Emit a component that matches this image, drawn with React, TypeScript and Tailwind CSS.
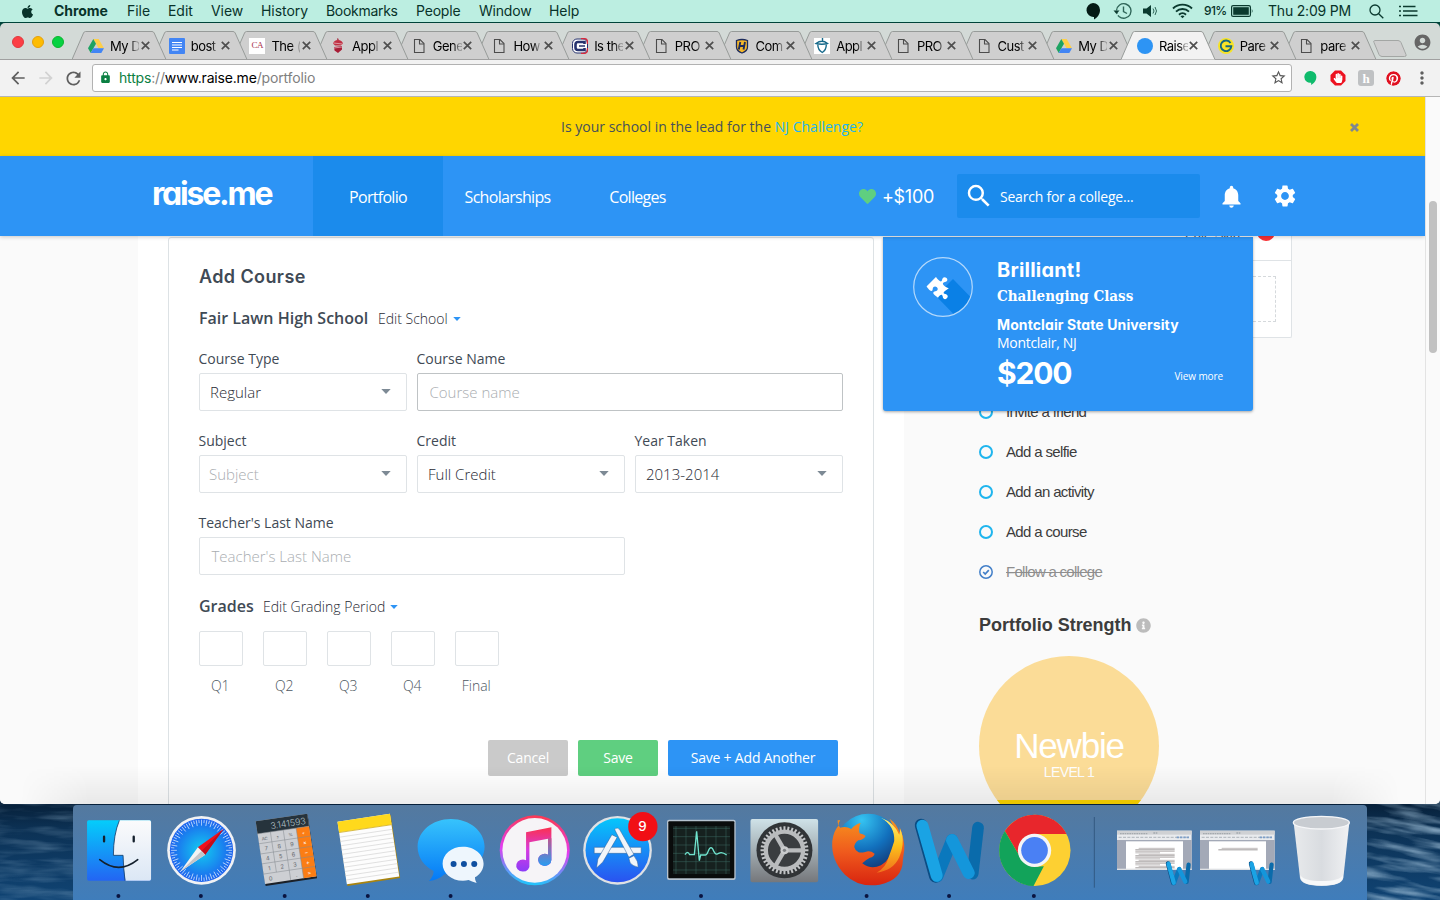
import type { ReactNode } from "react";
import { FaApple, FaHeart, FaInfoCircle, FaPinterest, FaPuzzlePiece, FaHandPaper } from "react-icons/fa";
import {
  MdAccountCircle,
  MdArrowBack,
  MdArrowForward,
  MdLock,
  MdMoreVert,
  MdNotifications,
  MdRefresh,
  MdSearch,
  MdSettings,
  MdStarBorder,
} from "react-icons/md";

/* ---------- Menu bar ---------- */

function MenuBar() {
  return (
    <div className="flex h-[23px] shrink-0 items-center border-b border-[#00443a] bg-[#bceee1] text-[14px] leading-[22px] whitespace-nowrap text-[#08332a]">
      <FaApple className="ml-[20px] size-[15px] shrink-0" />
      <div className="ml-[19px] flex tracking-[-0.05px]">
        <span className="w-[73px] font-bold">Chrome</span>
        <span className="w-[41px]">File</span>
        <span className="w-[43px]">Edit</span>
        <span className="w-[50px]">View</span>
        <span className="w-[65px]">History</span>
        <span className="w-[90px] tracking-[-0.3px]">Bookmarks</span>
        <span className="w-[63px] tracking-[-0.2px]">People</span>
        <span className="w-[70px] tracking-[-0.2px]">Window</span>
        <span className="w-[36px]">Help</span>
      </div>
      <div className="ml-[500px] flex items-center">
        <svg className="h-[18px] w-[16px]" viewBox="0 0 16 18">
          <path d="M8 1a7 7 0 1 0 1 14v2.500c3-1.500 6-5 6-9.500A7 7 0 0 0 8 1z" fill="#051b16" />
        </svg>
        <svg className="ml-[12px] h-[18px] w-[20px]" viewBox="0 0 20 18" fill="none" stroke="#2f6558" strokeWidth="1.400">
          <path d="M3.500 8.500A7.300 7.300 0 1 1 6 14.500" />
          <path d="M6 14.500a7.300 7.300 0 0 1-2-3" strokeDasharray="1.500 1.500" />
          <path d="M10.500 4.500v5l3.500 2" />
          <path d="M.500 8.500h6L3.500 12z" fill="#0b3a2f" stroke="none" />
        </svg>
        <svg className="ml-[10px] h-[14px] w-[15px]" viewBox="0 0 15 14" fill="#0b3a2f">
          <path d="M0 4.500h3.500L8 1v12L3.500 9.500H0z" />
          <path d="M10 4.500q2 2.500 0 5M12 3q3 4 0 8" fill="none" stroke="#2f6558" strokeWidth="1" />
        </svg>
        <svg className="ml-[14px] h-[16px] w-[21px]" viewBox="0 0 21 16" fill="none" stroke="#0b3a2f" strokeWidth="1.900">
          <path d="M1 5.500a13.500 13.500 0 0 1 19 0M4 8.700a9.200 9.200 0 0 1 13 0M7 11.700a5 5 0 0 1 7 0" />
          <path d="M8.500 13.300a3 3 0 0 1 4 0l-2 2z" fill="#0b3a2f" stroke="none" />
        </svg>
        <span className="ml-[11px] w-[23px] text-[12px] font-medium tracking-[-0.6px]">91%</span>
        <svg className="ml-[4px] h-[12px] w-[23px]" viewBox="0 0 23 12">
          <rect x=".6" y=".6" width="18.800" height="10.800" rx="1.500" fill="none" stroke="#0b3a2f" strokeWidth="1.200" />
          <rect x="2.200" y="2.200" width="15.600" height="7.600" fill="#0b3a2f" />
          <path d="M20.800 3.500q1.600 2.500 0 5z" fill="#0b3a2f" />
        </svg>
        <span className="ml-[14px] w-[84px] tracking-[-0.2px]">Thu 2:09 PM</span>
        <svg className="ml-[17px] h-[15px] w-[15px]" viewBox="0 0 15 15" fill="none" stroke="#0b3a2f" strokeWidth="1.300">
          <circle cx="6" cy="6" r="5" />
          <path d="M9.700 9.700l4.600 4.600" />
        </svg>
        <svg className="ml-[15px] h-[12px] w-[19px]" viewBox="0 0 19 12" stroke="#0b3a2f" strokeWidth="1.700">
          <path d="M0 1.500h2M4 1.500h12.500M0 6h2M4 6h14.500M0 10.500h2M4 10.500h14.500" />
        </svg>
      </div>
    </div>
  );
}

/* ---------- Browser tabs ---------- */

const DriveIcon = () => (
  <svg className="size-4" viewBox="0 0 16 16">
    <path d="M5.300 1h5.400L16 10.200h-5.400z" fill="#ffcf48" />
    <path d="M5.300 1 0 10.200 2.700 15 8 5.700z" fill="#1ea362" />
    <path d="M5.400 10.200H16L13.300 15H2.700z" fill="#4285f4" />
  </svg>
);
const DocIcon = () => (
  <svg className="size-4" viewBox="0 0 16 16">
    <rect width="16" height="16" rx="1" fill="#4285f4" />
    <path d="M3 4.500h10M3 7h10M3 9.500h10M3 12h6.500" stroke="#fff" strokeWidth="1.100" />
  </svg>
);
const PageIcon = () => (
  <svg className="size-4" viewBox="0 0 16 16" fill="none" stroke="#4c4c4c" strokeWidth="1.100">
    <path d="M3.500 1.500h5.500l4 4v9h-9.500z" />
    <path d="M8.500 1.500v4.500h4.500" />
  </svg>
);
const CaIcon = () => (
  <span className="flex size-4 items-center justify-center bg-white font-['Liberation_Serif',serif] text-[9px] leading-none tracking-[-0.5px] text-[#a8304c]">
    CA
  </span>
);
const AcornIcon = () => (
  <svg className="size-4" viewBox="0 0 16 16">
    <path d="M7.500 .5l.8 2" stroke="#a31f34" strokeWidth="1.200" />
    <path d="M3 5.500Q4 2 8 2t5 3.500L11 7.500H5z" fill="#c02f43" />
    <path d="M4 9l8-1v3.500L8 15 4.500 12.500z" fill="#a81c36" />
    <path d="M3.500 5l9 1M4 10l8-1" stroke="#e9c3c8" strokeWidth=".7" />
  </svg>
);
const CIcon = () => (
  <svg className="size-4" viewBox="0 0 16 16">
    <rect x=".5" y="1" width="15" height="14" rx="4.500" fill="#fff" stroke="#27336e" />
    <path d="M9 .600h3q3.500 0 3.500 3.500v2M15.500 10v2q0 3.400-3.500 3.400H9" fill="none" stroke="#d8293d" strokeWidth="1.400" />
    <path d="M12.500 6V4H6Q3.500 4 3.500 6.500v3Q3.500 12 6 12h6.500v-2" fill="none" stroke="#27336e" strokeWidth="2.600" />
    <path d="M7 8h6" stroke="#27336e" strokeWidth="1.600" />
  </svg>
);
const HIcon = () => (
  <svg className="size-4" viewBox="0 0 16 16">
    <path d="M2.500 2.500Q8 .500 13.500 2.500V9q0 4-5.500 6-5.500-2-5.500-6z" fill="#f4b72a" stroke="#1d2b5c" strokeWidth="1.300" />
    <path d="M6.300 4 4.800 11.500M11 4l-1.500 7.500M5.500 8h5" stroke="#1d2b5c" strokeWidth="1.900" />
  </svg>
);
const BoardIcon = () => (
  <svg className="size-4 bg-white" viewBox="0 0 16 16" fill="none" stroke="#176a8b" strokeWidth="1.400">
    <path d="M8.500 0v3M2 5.500Q8 1 13.500 5.500Q8 7 2 5.500z" />
    <path d="M3.800 6.500q0 5.500 4.500 8 4-2.500 4-8" />
  </svg>
);
const DotIcon = () => <span className="block size-4 rounded-full bg-[#2d94f4]" />;
const GIcon = () => (
  <svg className="size-4" viewBox="0 0 16 16">
    <circle cx="8" cy="8" r="8" fill="#f7e326" />
    <path d="M12.500 5A5.300 5.300 0 1 0 13.300 8.300H7.500" fill="none" stroke="#17697f" strokeWidth="1.900" />
  </svg>
);

const TABS: { icon: ReactNode; title: string; active?: boolean }[] = [
  { icon: <DriveIcon />, title: "My D" },
  { icon: <DocIcon />, title: "bost" },
  { icon: <CaIcon />, title: "The (" },
  { icon: <AcornIcon />, title: "Appl" },
  { icon: <PageIcon />, title: "Gene" },
  { icon: <PageIcon />, title: "How" },
  { icon: <CIcon />, title: "Is the" },
  { icon: <PageIcon />, title: "PRO" },
  { icon: <HIcon />, title: "Com" },
  { icon: <BoardIcon />, title: "Appl" },
  { icon: <PageIcon />, title: "PRO" },
  { icon: <PageIcon />, title: "Cust" },
  { icon: <DriveIcon />, title: "My D" },
  { icon: <DotIcon />, title: "Raise", active: true },
  { icon: <GIcon />, title: "Pare" },
  { icon: <PageIcon />, title: "pare" },
];

function TabStrip() {
  return (
    <div className="relative flex h-[37px] shrink-0 items-end bg-[#d3dad7]">
      <div className="flex h-[37px] w-[72px] shrink-0 items-center gap-[8px] pl-[12px]">
        <span className="size-[12px] rounded-full border border-[#e0383e] bg-[#fc3e45]" />
        <span className="size-[12px] rounded-full border border-[#e5a00d] bg-[#fdbc02]" />
        <span className="size-[12px] rounded-full border border-[#0cb530] bg-[#06d242]" />
      </div>
      {TABS.map((tab, i) => (
        <div
          key={i}
          className="relative flex h-[29px] w-[80.7px] shrink-0 items-center"
          style={{ zIndex: tab.active ? 30 : 20 - i }}
        >
          <svg className="absolute top-0 left-0 h-[29px] w-[95px]" viewBox="0 0 95 29">
            <path
              d="M0 28.500 11.500 2Q12.200.500 13.500.500H80Q81.500.500 82.200 2L94 28.500z"
              fill={tab.active ? "#f2f2f2" : "#cfcfcf"}
            />
            <path
              d="M0 28.500 11.500 2Q12.200.500 13.500.500H80Q81.500.500 82.200 2L94 28.500"
              fill="none"
              stroke="#979b99"
            />
            {!tab.active && <path d="M0 28.500H95" stroke="#a0a0a0" />}
          </svg>
          <span className="relative ml-[16px] size-4 shrink-0">{tab.icon}</span>
          <span className="relative ml-[6px] w-[29px] text-[13px] leading-[18px] tracking-[-0.5px] whitespace-nowrap text-black [mask-image:linear-gradient(to_right,black_70%,rgba(0,0,0,0.25)_92%)]">
            {tab.title}
          </span>
          <svg className="relative ml-[1.500px] size-[9px] shrink-0" viewBox="0 0 9 9" stroke="#4f4f4f" strokeWidth="1.700">
            <path d="M.8.8l7.400 7.400M8.200.8.8 8.200" />
          </svg>
        </div>
      ))}
      <svg className="mb-[3px] ml-[10px] h-[17px] w-[34px] shrink-0" viewBox="0 0 34 17">
        <path d="M1.500.5H25q2 0 3 2l5 12q.8 2-1.500 2H9q-2 0-3-2L1 2.500Q.3.5 1.500.5z" fill="#cfcfcf" stroke="#a3a6a4" />
      </svg>
      <MdAccountCircle className="mb-[8px] ml-[6px] size-[19px] shrink-0 text-[#666]" />
      <div className="absolute inset-x-0 bottom-0 h-px bg-[#a0a0a0]" />
    </div>
  );
}

function Toolbar() {
  return (
    <div className="flex h-[37px] shrink-0 items-center border-b border-[#b5b5b5] bg-[#f2f2f2] text-[#5f5f5f]">
      <MdArrowBack className="ml-[8px] size-[20px]" />
      <MdArrowForward className="ml-[8px] size-[20px] text-[#d2d2d2]" />
      <MdRefresh className="ml-[7px] size-[21px]" />
      <div className="ml-[8px] flex h-[28px] w-[1200px] items-center rounded-[3px] border border-[#b2b2b2] bg-white pb-px text-[14px] text-[#808080]">
        <MdLock className="ml-[6px] size-[13px] text-[#0b8043]" />
        <span className="ml-[7px] tracking-[-0.17px]">
          <span className="text-[#0b8043]">https</span>://<span className="text-black">www.raise.me</span>/portfolio
        </span>
        <MdStarBorder className="mr-[4px] ml-auto size-[17px] text-[#5a5a5a]" />
      </div>
      <svg className="ml-[12px] h-[14px] w-[13px]" viewBox="0 0 14 15">
        <path d="M7 0a6.300 6.300 0 1 0 .7 12.500V15c3-1.500 5.600-4.500 5.600-8.500A6.300 6.300 0 0 0 7 0z" fill="#0fbb6c" />
      </svg>
      <span className="relative ml-[13px] flex size-[16px] items-center justify-center">
        <svg className="absolute size-[16px]" viewBox="0 0 16 16">
          <path d="M5 .5h6L15.500 5v6L11 15.500H5L.5 11V5z" fill="#ed1220" />
        </svg>
        <FaHandPaper className="relative size-[10px] text-white" />
      </span>
      <span className="ml-[12px] flex size-[16px] items-center justify-center rounded-[3px] bg-[#bfc1c3] font-['Liberation_Serif',serif] text-[13px] leading-none font-bold text-white">
        h
      </span>
      <FaPinterest className="ml-[12px] size-[15px] rounded-full bg-white text-[#e01020]" />
      <MdMoreVert className="ml-[11px] size-[20px]" />
    </div>
  );
}

/* ---------- raise.me page ---------- */

function Banner() {
  return (
    <div className="flex h-[59px] shrink-0 items-center bg-[#ffd600] pb-px text-[14px] text-[#46505a]">
      <span className="ml-[561px] w-[302px] tracking-[0.01px] whitespace-nowrap">
        Is your school in the lead for the <span className="text-[#1fb5ee]">NJ Challenge?</span>
      </span>
      <svg className="mt-[2px] ml-[487px] size-[9px]" viewBox="0 0 9 9" stroke="#7f8790" strokeWidth="2.800">
        <path d="M1 1l7 7M8 1 1 8" />
      </svg>
    </div>
  );
}

function NavBar() {
  return (
    <div className="relative z-20 flex h-[80px] shrink-0 items-center bg-[#2d94f5] text-[16px] text-white shadow-[0_1px_4px_rgba(0,0,0,0.2)]">
      <span className="mb-[4px] ml-[152px] w-[161px] font-['Inter',sans-serif] text-[32px] leading-none font-bold tracking-[-2.2px] [font-feature-settings:'cv11']">
        raise.me
      </span>
      <span className="flex h-full w-[130px] items-center justify-center bg-[#1b8bec] pt-px tracking-[-0.7px]">Portfolio</span>
      <span className="flex w-[129px] justify-center pt-px tracking-[-0.7px]">Scholarships</span>
      <span className="flex w-[131px] justify-center pt-px tracking-[-0.7px]">Colleges</span>
      <FaHeart className="ml-[156px] size-[17px] text-[#5fcf80]" />
      <span className="ml-[6px] w-[53px] font-['Inter',sans-serif] text-[18px] tracking-[-0.3px]">+$100</span>
      <div className="ml-[22px] flex h-[44px] w-[243px] items-center rounded-[2px] bg-[#1b8bec] text-[14px]">
        <MdSearch className="ml-[7px] size-[30px]" />
        <span className="ml-[6px] tracking-[-0.22px]">Search for a college...</span>
      </div>
      <MdNotifications className="ml-[18px] size-[27px]" />
      <MdSettings className="ml-[27px] size-[26px]" />
    </div>
  );
}

const Caret = ({ className }: { className: string }) => (
  <svg className={className} viewBox="0 0 10 5" fill="currentColor">
    <path d="M.3 0h9.400L5 5z" />
  </svg>
);

function Select({ label, value, muted }: { label: string; value: string; muted?: boolean }) {
  return (
    <div className="flex w-[208px] flex-col gap-[4px]">
      <label className="-ml-[0.5px] h-[20px] text-[14px] leading-[20px]">{label}</label>
      <div className="flex h-[38px] items-center justify-between rounded-[2px] border border-[#dfe3e6] pr-[15px] pl-[10px] text-[15px] font-light text-[#1f2933]">
        <span className={muted ? "-ml-px text-[#a9adb1]" : ""}>{value}</span>
        <Caret className="mb-[2px] h-[5px] w-[10px] text-[#7d8a95]" />
      </div>
    </div>
  );
}

function TextField({ label, placeholder, dark }: { label: string; placeholder: string; dark?: boolean }) {
  return (
    <div className="flex w-[426px] flex-col gap-[4px]">
      <label className="-ml-[0.5px] h-[20px] text-[14px] leading-[20px]">{label}</label>
      <div
        className={
          (dark ? "border-[#bfc3c5]" : "border-[#dfe3e6]") +
          " flex h-[38px] items-center rounded-[2px] border pl-[11.5px] text-[15px] font-light text-[#a9adb1]"
        }
      >
        {placeholder}
      </div>
    </div>
  );
}

function CourseForm() {
  return (
    <div className="mt-px ml-[30px] flex h-[600px] w-[706px] flex-col rounded-[3px] border border-[#dde2e5] pr-[30px] pl-[30px] text-[#3f4a55]">
      <h2 className="mt-[26px] h-[26px] font-['Inter',sans-serif] text-[18px] leading-[26px] font-semibold tracking-[0.4px]">Add Course</h2>
      <div className="mt-[16px] flex h-[24px] items-center">
        <span className="w-[179px] text-[16px] font-semibold whitespace-nowrap">Fair Lawn High School</span>
        <span className="text-[14px] font-light text-[#1f2933]">Edit School</span>
        <Caret className="mt-[2px] ml-[5px] h-[4px] w-[8px] text-[#2d94f5]" />
      </div>
      <div className="mt-[19px] flex gap-[10px]">
        <Select label="Course Type" value="Regular" />
        <TextField label="Course Name" placeholder="Course name" dark />
      </div>
      <div className="mt-[20px] flex gap-[10px]">
        <Select label="Subject" value="Subject" muted />
        <Select label="Credit" value="Full Credit" />
        <Select label="Year Taken" value="2013-2014" />
      </div>
      <div className="mt-[20px] flex">
        <TextField label="Teacher's Last Name" placeholder="Teacher's Last Name" />
      </div>
      <div className="mt-[19px] flex h-[24px] items-center">
        <span className="w-[64px] text-[16px] font-semibold">Grades</span>
        <span className="text-[14px] font-light text-[#1f2933]">Edit Grading Period</span>
        <Caret className="mt-[2px] ml-[5px] h-[4px] w-[8px] text-[#2d94f5]" />
      </div>
      <div className="mt-[13px] flex gap-[20px] text-[14px] font-light text-[#4d5761]">
        {["Q1", "Q2", "Q3", "Q4", "Final"].map((q) => (
          <div key={q} className="flex w-[44px] flex-col items-center">
            <div className="h-[35px] w-[44px] rounded-[2px] border border-[#dfe3e6]" />
            <span className="mt-[10px] mr-[1.5px] h-[20px] leading-[20px]">{q}</span>
          </div>
        ))}
      </div>
      <div className="mt-[44px] mr-[5px] flex justify-end gap-[10px] text-[14px] tracking-[-0.2px] text-white">
        <span className="flex h-[36px] w-[80px] items-center justify-center rounded-[2px] bg-[#cacaca] pb-[2px]">Cancel</span>
        <span className="flex h-[36px] w-[80px] items-center justify-center rounded-[2px] bg-[#5fcf80] pb-[2px]">Save</span>
        <span className="flex h-[36px] w-[170px] items-center justify-center rounded-[2px] bg-[#2d94f5] pb-[2px]">Save + Add Another</span>
      </div>
    </div>
  );
}

function Sidebar() {
  const todo = ["Invite a friend", "Add a selfie", "Add an activity", "Add a course"];
  return (
    <div className="w-[388px] font-['Liberation_Sans',sans-serif] text-[#3c3c3c]">
      <div className="h-[102px] rounded-b-[2px] border-r border-b border-[#dfe3e6] bg-white">
        <div className="flex h-[25px] justify-end overflow-hidden border-b border-[#dfe3e6]">
          <span className="-mt-[10px] mr-[17px] text-[13px] leading-[17px] text-[#555]">Edit, Skip</span>
          <span className="-mt-[13px] mr-[16px] size-[18px] rounded-full bg-[#f93034]" />
        </div>
        <div className="mt-[15px] mr-[15px] h-[46px] border border-dashed border-[#d5d9dc]" />
      </div>
      <div className="mt-[54px] ml-[75px] flex flex-col text-[15px] tracking-[-0.65px]">
        {todo.map((t) => (
          <div key={t} className="flex h-[40px] items-center">
            <span className="mb-px size-[14px] rounded-full border-2 border-[#1fb5ee]" />
            <span className="ml-[13px]">{t}</span>
          </div>
        ))}
        <div className="flex h-[40px] items-center text-[#8e8e8e]">
          <svg className="mb-px size-[14px]" viewBox="0 0 14 14" fill="none" stroke="#427fc8">
            <circle cx="7" cy="7" r="6.200" strokeWidth="1.500" />
            <path d="M4.200 7l2 2 3.600-3.800" strokeWidth="1.700" />
          </svg>
          <span className="ml-[13px] tracking-[-0.72px] line-through">Follow a college</span>
        </div>
      </div>
      <div className="mt-[21px] ml-[75px] flex h-[24px] items-center">
        <span className="text-[18px] font-bold tracking-[-0.03px] whitespace-nowrap">Portfolio Strength</span>
        <FaInfoCircle className="ml-[5px] size-[15px] text-[#bcbcbc]" />
      </div>
      <div className="mt-[19px] ml-[75px] h-[180px] w-[180px] overflow-hidden rounded-full bg-[#fbdc97] text-center text-white">
        <div className="mt-[69px] h-[42px] text-[35px] leading-[42px] tracking-[-1.2px]">Newbie</div>
        <div className="h-[33px] text-[14px] leading-[10px] tracking-[-0.6px]">LEVEL 1</div>
        <div className="h-[36px] bg-[#fdd500]" />
      </div>
    </div>
  );
}

function AwardPopup() {
  return (
    <div className="absolute top-[1px] left-[883px] z-10 flex h-[174px] w-[370px] rounded-b-[3px] bg-[#2d94f5] text-white shadow-[0_1px_3px_rgba(0,0,0,0.35)]">
      <div className="relative mt-[20px] ml-[30px] size-[60px] shrink-0">
        <svg className="absolute inset-0 size-[60px]" viewBox="0 0 60 60">
          <path d="M40 22 57.500 40A29.500 29.500 0 0 1 41 57.500L23 39z" fill="#0a80e6" />
          <circle cx="30" cy="30" r="29.300" fill="none" stroke="#b5d9fb" strokeWidth="1.200" />
        </svg>
        <FaPuzzlePiece className="absolute top-[18.5px] left-[17px] size-[23px] rotate-45" />
      </div>
      <div className="ml-[24px] w-[226px] font-['Inter',sans-serif] whitespace-nowrap [font-feature-settings:'cv11']">
        <div className="mt-[20px] h-[26px] text-[20px] leading-[26px] font-bold tracking-[0.2px]">Brilliant!</div>
        <div className="mt-[2px] h-[23px] font-['DejaVu_Serif_Condensed','DejaVu_Serif',serif] text-[15px] leading-[22px] font-bold">
          Challenging Class
        </div>
        <div className="mt-[7px] h-[20px] text-[14px] leading-[20px] font-bold tracking-[0.1px]">Montclair State University</div>
        <div className="h-[18px] font-['Open_Sans',sans-serif] text-[14px] leading-[16px] tracking-[-0.3px]">Montclair, NJ</div>
        <div className="flex h-[40px] items-center justify-between">
          <span className="text-[30px] leading-[40px] font-bold tracking-[-1.2px]">$200</span>
          <span className="mt-[7px] font-['Open_Sans',sans-serif] text-[10px] tracking-[-0.1px]">View more</span>
        </div>
      </div>
    </div>
  );
}

function Page() {
  return (
    <div className="flex h-[707px] shrink-0 bg-white">
      <div className="flex w-[1425px] flex-col overflow-hidden">
        <Banner />
        <NavBar />
        <div className="relative flex h-[568px] overflow-hidden bg-[#fafafa]">
          <div className="ml-[138px] h-[568px] w-[766px] shrink-0 bg-white">
            <CourseForm />
          </div>
          <Sidebar />
          <AwardPopup />
        </div>
      </div>
      <div className="w-[15px] border-l border-[#e3e3e3] bg-[#fafafa] pt-[104px] pl-[3px]">
        <div className="h-[152px] w-[8px] rounded-full bg-[#c1c1c1]" />
      </div>
      <div className="pointer-events-none absolute bottom-0 left-[20px] z-30 h-[38px] w-[1380px] bg-linear-to-b from-transparent to-black/7 [mask-image:linear-gradient(to_right,transparent,black_5%,black_95%,transparent)]" />
    </div>
  );
}

/* ---------- Dock ---------- */

function DockItem({ x, dot, children }: { x: number; dot?: number; children: ReactNode }) {
  return (
    <svg className="h-[95px] w-[83.2px] shrink-0" viewBox={`${x} 30 249.6 285`} overflow="visible">
      {children}
      {dot && <circle cx={dot} cy="303" r="6" fill="#0a1440" />}
    </svg>
  );
}

const range = (n: number) => Array.from({ length: n }, (_, i) => i);

function Finder() {
  return (
    <DockItem x={229.8} dot={354}>
      <defs>
        <linearGradient id="fnB" x1="0" y1="0" x2="0" y2="1">
          <stop offset="0" stopColor="#04cdfb" />
          <stop offset="1" stopColor="#2365f3" />
        </linearGradient>
        <linearGradient id="fnW" x1="0" y1="0" x2="0" y2="1">
          <stop offset="0" stopColor="#fbfbfc" />
          <stop offset="1" stopColor="#dbe7f5" />
        </linearGradient>
      </defs>
      <rect x="260" y="76" width="192" height="181" rx="5" fill="url(#fnB)" />
      <path d="M357 76h90q5 0 5 5v171q0 5-5 5h-72q-6-36-7-76h-29q0-62 18-105z" fill="url(#fnW)" />
      <path d="M357 76q-18 43-18 105h29q1 40 6 76" fill="none" stroke="#16406c" strokeWidth="2.500" />
      <path d="M298 194q57 46 114 0" fill="none" stroke="#14202c" strokeWidth="5" strokeLinecap="round" />
      <path d="M311 125v14M400 125v14" stroke="#14202c" strokeWidth="7" strokeLinecap="round" />
    </DockItem>
  );
}

function Safari() {
  return (
    <DockItem x={479.4} dot={602}>
      <defs>
        <radialGradient id="sf">
          <stop offset="0" stopColor="#12cdf0" />
          <stop offset="1" stopColor="#1d62ee" />
        </radialGradient>
      </defs>
      <circle cx="604" cy="166" r="103" fill="#f1f2f4" />
      <circle cx="604" cy="166" r="95" fill="url(#sf)" />
      {range(72).map((i) => (
        <path key={i} d={i % 2 ? "M604 74v10" : "M604 74v18"} stroke="#e9f5ff" strokeWidth="2" transform={`rotate(${i * 5} 604 166)`} />
      ))}
      <path d="M670 102 593 157l22 22z" fill="#f0101c" />
      <path d="M670 102 604 168l11 11z" fill="#c40d1a" />
      <path d="M540 230 593 157l22 22z" fill="#f3f3f3" />
      <path d="M540 230l64-62 11 11z" fill="#c5c5c8" />
    </DockItem>
  );
}

function Calculator() {
  const keys = [
    ["AC", "±", "%", "÷"],
    ["7", "8", "9", "×"],
    ["4", "5", "6", "−"],
    ["1", "2", "3", "+"],
    ["0", "", ".", "="],
  ];
  return (
    <DockItem x={729} dot={854}>
      <g transform="translate(767 79) rotate(-8.500)">
        <rect x="1" y="3" width="156" height="193" fill="#1b2027" />
        <rect width="156" height="190" fill="#cdcfd3" />
        <rect width="156" height="38" fill="#26333c" />
        <text x="149" y="30" textAnchor="end" fontSize="27" fill="#b9c6cc" fontFamily="Inter, sans-serif" fontWeight="300">
          3.141593
        </text>
        <rect x="117" y="38" width="39" height="152" fill="#fb7d14" />
        {[38, 68, 99, 129, 160].map((y) => (
          <path key={y} d={`M0 ${y}H156`} stroke="#85898f" strokeWidth="1.500" />
        ))}
        <path d="M39 38V160M78 38V190M117 38V190" stroke="#85898f" strokeWidth="1.500" />
        {keys.map((row, r) =>
          row.map((k, c) => (
            <text
              key={`${r}${c}`}
              x={19.500 + 39 * c}
              y={60 + 30.500 * r}
              textAnchor="middle"
              fontSize={r === 0 ? 13 : 17}
              fill={c === 3 ? "#fff" : "#63676c"}
              fontFamily="Inter, sans-serif"
            >
              {k}
            </text>
          )),
        )}
      </g>
    </DockItem>
  );
}

function Notes() {
  return (
    <DockItem x={978.6} dot={1104}>
      <g transform="translate(1013 80) rotate(-8.500)">
        <rect x="1" y="3" width="160" height="192" fill="#a9840f" />
        <rect width="159" height="190" fill="#fdfdfd" />
        <rect width="159" height="32" fill="#ffd91c" />
        <path d="M0 33H159" stroke="#c9a30d" strokeWidth="2" />
        {range(11).map((i) => (
          <path key={i} d={`M0 ${47 + i * 13}H159`} stroke="#d0d0d0" strokeWidth="1.800" />
        ))}
      </g>
    </DockItem>
  );
}

function Messages() {
  return (
    <DockItem x={118.2} dot={243}>
      <defs>
        <linearGradient id="ms" x1="0" y1="0" x2="0" y2="1">
          <stop offset="0" stopColor="#37c3fc" />
          <stop offset="1" stopColor="#0479f6" />
        </linearGradient>
      </defs>
      <path d="M244 72c56 0 101 37 101 83s-45 83-101 83q-10 0-18-1-20 18-48 21 14-14 14-30c-29-15-48-42-48-73 0-46 44-83 100-83z" fill="url(#ms)" />
      <path d="M280 155c35 0 62 23 62 51 0 17-10 32-26 41q0 10 5 17-15-4-24-9-8 2-17 2c-35 0-61-23-61-51s26-51 61-51z" fill="#eef6fd" />
      <circle cx="252" cy="207" r="9" fill="#0f4fa0" />
      <circle cx="283" cy="207" r="9" fill="#0f4fa0" />
      <circle cx="314" cy="207" r="9" fill="#0f4fa0" />
    </DockItem>
  );
}

function Itunes() {
  return (
    <DockItem x={367.8}>
      <defs>
        <linearGradient id="itR" x1="0.600" y1="0" x2="0.500" y2="1">
          <stop offset="0" stopColor="#fb3a4f" />
          <stop offset=".5" stopColor="#e43cf0" />
          <stop offset="1" stopColor="#1fc6fb" />
        </linearGradient>
        <linearGradient id="itN" gradientUnits="userSpaceOnUse" x1="500" y1="98" x2="500" y2="230">
          <stop offset="0" stopColor="#fb3150" />
          <stop offset=".5" stopColor="#d73ae0" />
          <stop offset="1" stopColor="#8a3cf8" />
        </linearGradient>
        <linearGradient id="itS" gradientUnits="userSpaceOnUse" x1="500" y1="98" x2="500" y2="218">
          <stop offset="0" stopColor="#f93a6a" />
          <stop offset="1" stopColor="#1ea2f8" />
        </linearGradient>
      </defs>
      <circle cx="493" cy="166" r="105" fill="url(#itR)" />
      <circle cx="493" cy="166" r="97" fill="#f6f4f7" />
      <path d="M467 112 543 97V195a20 18 0 1 1-10-16V131L477 142V208a20 18 0 1 1-10-12z" fill="url(#itN)" />
      <path d="M533 130h10v65a20 18 0 1 1-10-16z" fill="url(#itS)" />
    </DockItem>
  );
}

function AppStore() {
  return (
    <DockItem x={617.4}>
      <defs>
        <linearGradient id="as" x1="0" y1="0" x2="0" y2="1">
          <stop offset="0" stopColor="#06c6fb" />
          <stop offset="1" stopColor="#2a52f0" />
        </linearGradient>
      </defs>
      <circle cx="742" cy="166" r="103" fill="#dfe1e4" />
      <circle cx="742" cy="166" r="96" fill="url(#as)" />
      <g stroke="#2a5c93" strokeWidth="1.500" fill="#f1f5fa">
        <path d="M672 157h141v18H672z" />
        <path d="M725 119l16 8-43 74-19 18 4-27z" />
        <path d="M733 103q8-8 15 0l43 75-15 9z" />
        <path d="M776 190l15-8q14 16 13 35-18-5-24-13z" />
      </g>
      <circle cx="818" cy="95" r="44" fill="#f10f15" />
      <text x="817" y="109" textAnchor="middle" fontSize="40" fontWeight="500" fill="#fff" fontFamily="Inter, sans-serif">
        9
      </text>
    </DockItem>
  );
}

function ActivityMonitor() {
  return (
    <DockItem x={867} dot={993}>
      <rect x="891" y="74" width="206" height="181" rx="6" fill="#b7c3cf" />
      <rect x="895" y="79" width="198" height="171" rx="3" fill="#0a0c0c" />
      <rect x="909" y="93" width="171" height="144" fill="#16211f" />
      {range(6).map((i) => (
        <path key={i} d={`M${918 + i * 30} 93V237M909 ${100 + i * 25}H1080`} stroke="#3d6c63" strokeWidth="1.500" />
      ))}
      <path
        d="M945 179q8-14 14 0h14l7-70 8 88 4-17h14q4 0 8-10 9-24 18 0 6 12 14 5 10-6 24 5"
        fill="none"
        stroke="#6fe3cd"
        strokeWidth="4"
      />
    </DockItem>
  );
}

function SystemPreferences() {
  return (
    <DockItem x={6.6}>
      <defs>
        <linearGradient id="sp" x1="0" y1="0" x2="0" y2="1">
          <stop offset="0" stopColor="#cfe2e8" />
          <stop offset="1" stopColor="#75777b" />
        </linearGradient>
      </defs>
      <rect x="32" y="72" width="203" height="190" rx="6" fill="url(#sp)" />
      <circle cx="134" cy="166" r="84" fill="#313437" />
      {range(36).map((i) => (
        <path key={i} d="M134 94v14" stroke="#c3c5c7" strokeWidth="6" transform={`rotate(${i * 10} 134 166)`} />
      ))}
      <circle cx="134" cy="166" r="56" fill="#3a3d40" stroke="#b9bbbd" strokeWidth="13" />
      {[90, 210, 330].map((a) => (
        <path key={a} d="M134 166V112" stroke="#b9bbbd" strokeWidth="13" transform={`rotate(${a} 134 166)`} />
      ))}
      <circle cx="134" cy="166" r="12" fill="#c9cbcd" />
      <circle cx="134" cy="166" r="5" fill="#7d8084" />
    </DockItem>
  );
}

function Firefox() {
  return (
    <DockItem x={256.2} dot={381}>
      <defs>
        <radialGradient id="ffB" cx=".4" cy=".1" r=".9">
          <stop offset="0" stopColor="#35c4f2" />
          <stop offset=".5" stopColor="#1270bd" />
          <stop offset="1" stopColor="#12275f" />
        </radialGradient>
        <linearGradient id="ffO" x1="0" y1="0" x2="0" y2="1">
          <stop offset="0" stopColor="#f7921e" />
          <stop offset=".5" stopColor="#ef5a1d" />
          <stop offset="1" stopColor="#d8240f" />
        </linearGradient>
        <linearGradient id="ffY" x1="0" y1="0" x2="0" y2="1">
          <stop offset="0" stopColor="#fff27a" />
          <stop offset=".5" stopColor="#fcc21b" />
          <stop offset="1" stopColor="#f0701c" />
        </linearGradient>
      </defs>
      <circle cx="386" cy="154" r="98" fill="url(#ffB)" />
      <path
        d="M294 76q0 16 8 22 18-5 33 4 12-14 28-18-7 17-3 31 14 4 18 8-6 12-22 13-12 9-12 20 2 10 13 16 8 2 20-1 14-6 28 5-2 9-14 12-14 7-23 17 26 20 56 6 30-18 38-58 14-40-12-82 22 16 30 42 2-8 0-18 16 40 14 70-2 12-4 30-1 60-70 74-62 10-104-30-42-42-38-100 4-32 20-48-2-8 4-15z"
        fill="url(#ffO)"
      />
      <path
        d="M424 68q42 24 40 70-8 26-17 49-8 32-36 46 50-6 68-46 8-18 10-38 3-28-8-48 1 12-2 18-14-36-55-51z"
        fill="url(#ffY)"
      />
    </DockItem>
  );
}

const WordStrokes = () => (
  <>
    <path d="M545 90 588 244" stroke="#0b4d84" strokeWidth="38" />
    <path d="M716 98 700 236" stroke="#0a6bab" strokeWidth="35" />
    <path d="M594 244 638 135" stroke="#0a78bd" strokeWidth="36" />
    <path d="M638 135 688 234" stroke="#1496db" strokeWidth="36" />
    <path d="M549 92 592 242" stroke="#1aa3e4" strokeWidth="36" />
  </>
);

function Word() {
  return (
    <DockItem x={505.8} dot={629}>
      <g fill="none" strokeLinecap="round">
        <WordStrokes />
      </g>
    </DockItem>
  );
}

function ChromeIcon() {
  return (
    <DockItem x={755.4} dot={881}>
      <circle cx="884" cy="166" r="107" fill="#fdd032" />
      <path d="M794 108A107 107 0 0 1 979 117H884L842 190z" fill="#e8262c" />
      <path d="M794 108 842 190q16 24 42 25l27-1-31 59A107 107 0 0 1 794 108z" fill="#12a35a" />
      <circle cx="883" cy="166" r="50" fill="#f4f5f7" />
      <circle cx="883" cy="166" r="40" fill="#4a80f4" />
    </DockItem>
  );
}

function MiniWindow({ x, lines }: { x: number; lines: number }) {
  return (
    <g transform={`translate(${x} 0)`}>
      <rect x="111" y="107" width="224" height="118" fill="#e9ebee" />
      <rect x="111" y="107" width="224" height="12" fill="#cfd1d4" />
      <path d="M120 116h84M220 114h12" stroke="#a3a9ae" strokeWidth="4" strokeDasharray="5 2" />
      <path d="M116 127h210" stroke="#b9bec4" strokeWidth="4" strokeDasharray="9 4" />
      <path d="M290 127h40" stroke="#7e9fc8" strokeWidth="5" strokeDasharray="7 3" />
      <rect x="111" y="135" width="224" height="90" fill="#a3a9b7" />
      <rect x="138" y="139" width="171" height="85" fill="#fff" />
      {range(lines).map((i) => (
        <path
          key={i}
          d={`M${i % 4 ? 166 : 176} ${160 + i * 4.500}H${i % 4 === 3 ? 240 : 284}`}
          stroke={i % 4 === 1 ? "#6c6565" : "#a19c9c"}
          strokeWidth="2"
        />
      ))}
      <rect x="111" y="221" width="224" height="4" fill="#dfe1e4" />
      <g fill="none" strokeLinecap="round" transform="translate(68 172) scale(.36 .375)">
        <WordStrokes />
      </g>
    </g>
  );
}

function DockRight() {
  return (
    <svg className="h-[95px] w-[292px] shrink-0" viewBox="-15 30 876 285">
      <defs>
        <linearGradient id="tr" x1="0" y1="0" x2="1" y2="0">
          <stop offset="0" stopColor="#e8eaec" />
          <stop offset=".5" stopColor="#d9dce0" />
          <stop offset="1" stopColor="#f0f1f3" />
        </linearGradient>
      </defs>
      <path d="M43 66V278" stroke="#2e5379" strokeWidth="2.500" />
      <MiniWindow x={0} lines={14} />
      <MiniWindow x={249} lines={2} />
      <path d="M641 83 660 248q4 24 65 24t65-24L808 83z" fill="url(#tr)" />
      <path d="M661 240q10 18 64 18t64-18l-1 10q-6 22-63 22t-63-22z" fill="#f7f8f9" />
      <ellipse cx="724" cy="83" rx="84" ry="19" fill="#c8ccd1" stroke="#f5f6f8" strokeWidth="4" />
    </svg>
  );
}

function Dock() {
  return (
    <div className="relative z-10 flex h-[95px] w-[1294px] overflow-hidden rounded-t-[4px] bg-linear-to-b from-[#54799f] to-[#3f7dbb] pl-[3.6px]">
      <Finder />
      <Safari />
      <Calculator />
      <Notes />
      <Messages />
      <Itunes />
      <AppStore />
      <ActivityMonitor />
      <SystemPreferences />
      <Firefox />
      <Word />
      <ChromeIcon />
      <DockRight />
    </div>
  );
}

function Wallpaper() {
  return (
    <svg className="absolute inset-x-0 bottom-0 h-[110px] w-[1440px]" viewBox="0 0 1440 110">
      <defs>
        <linearGradient id="wp" x1="0" y1="0" x2="0" y2="1">
          <stop offset="0" stopColor="#04172b" />
          <stop offset=".35" stopColor="#0c3154" />
          <stop offset="1" stopColor="#104474" />
        </linearGradient>
        <filter id="waves" x="0" y="0" width="100%" height="100%">
          <feTurbulence type="fractalNoise" baseFrequency="0.018 0.13" numOctaves="3" seed="4" />
          <feColorMatrix values="0 0 0 0 0.38  0 0 0 0 0.56  0 0 0 0 0.72  1.9 0 0 0 -0.76" />
        </filter>
      </defs>
      <rect width="1440" height="110" fill="url(#wp)" />
      <g transform="rotate(9 1400 60)">
        <rect x="1340" y="-20" width="140" height="160" filter="url(#waves)" opacity=".8" />
      </g>
      <rect y="12" width="90" height="98" filter="url(#waves)" opacity=".35" />
    </svg>
  );
}

export default function App() {
  return (
    <div className="relative flex h-[900px] w-[1440px] flex-col overflow-hidden bg-[#00443a] font-['Inter',sans-serif]">
      <Wallpaper />
      <div className="relative">
        <MenuBar />
      </div>
      <div className="relative flex h-[781px] shrink-0 flex-col overflow-hidden rounded-[5px] font-['Open_Sans',sans-serif]">
        <div className="font-['Inter',sans-serif]">
          <TabStrip />
          <Toolbar />
        </div>
        <Page />
      </div>
      <div className="mt-px flex justify-center">
        <Dock />
      </div>
    </div>
  );
}
